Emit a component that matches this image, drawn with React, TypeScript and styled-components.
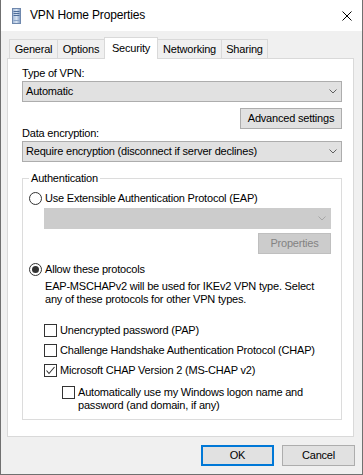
import React from 'react';
import styled, { createGlobalStyle } from 'styled-components';

const GlobalStyle = createGlobalStyle`
  html, body { margin: 0; padding: 0; background: #ffffff; }
  * { box-sizing: border-box; }
`;

const FONT = `"Liberation Sans", Arial, sans-serif`;

const Window = styled.div`
  width: 363px;
  height: 475px;
  display: flex;
  flex-direction: column;
  background: #f0f0f0;
  border: 1px solid #707070;
  border-top: none;
  font-family: ${FONT};
  font-size: 11px;
  line-height: 13px;
  letter-spacing: -0.2px;
  color: #000;
`;

const TitleBar = styled.div`
  height: 31px;
  flex: none;
  display: flex;
  align-items: center;
  background: #ffffff;
  padding-left: 11px;
`;

const Title = styled.div`
  flex: 1;
  margin-left: 9px;
  font-size: 12px;
  letter-spacing: -0.15px;
  color: #000;
`;

const CloseButton = styled.div`
  width: 30px;
  height: 31px;
  display: flex;
  align-items: center;
  justify-content: center;
`;

const Body = styled.div`
  flex: 1;
  display: flex;
  flex-direction: column;
  padding: 6px 8px 0 6px;
`;

const TabStrip = styled.div`
  display: flex;
  align-items: flex-end;
  height: 21px;
  margin-left: 2px;
`;

const Tab = styled.div<{ $active?: boolean; $w: number }>`
  width: ${p => p.$w}px;
  height: ${p => (p.$active ? 22 : 19)}px;
  margin-bottom: ${p => (p.$active ? -1 : 0)}px;
  display: flex;
  align-items: center;
  justify-content: center;
  padding-bottom: ${p => (p.$active ? 1 : 0)}px;
  background: ${p => (p.$active ? '#ffffff' : '#f0f0f0')};
  border: 1px solid #d9d9d9;
  border-bottom: none;
  position: relative;
  z-index: ${p => (p.$active ? 1 : 0)};
  & + & { margin-left: -1px; }
`;

const Panel = styled.div`
  width: 347px;
  height: 379px;
  background: #ffffff;
  border: 1px solid #d9d9d9;
  padding: 8px 11px 0 14px;
  display: flex;
  flex-direction: column;
`;

const Label = styled.div<{ $mt?: number }>`
  margin-top: ${p => p.$mt ?? 0}px;
  height: 13px;
`;

const Select = styled.div<{ $disabled?: boolean; $mt?: number; $ml?: number }>`
  height: 21px;
  margin-top: ${p => p.$mt ?? 0}px;
  margin-left: ${p => p.$ml ?? 0}px;
  display: flex;
  align-items: center;
  justify-content: space-between;
  padding: 0 4px 0 3px;
  background: ${p => (p.$disabled ? '#cccccc' : '#e1e1e1')};
  border: 1px solid ${p => (p.$disabled ? '#cccccc' : '#adadad')};
`;

const ButtonRow = styled.div<{ $mt?: number }>`
  display: flex;
  justify-content: flex-end;
  gap: 8px;
  margin-top: ${p => p.$mt ?? 0}px;
`;

const Button = styled.div<{ $w: number; $disabled?: boolean; $default?: boolean }>`
  width: ${p => p.$w}px;
  height: 21px;
  display: flex;
  align-items: center;
  justify-content: center;
  background: ${p => (p.$disabled ? '#cccccc' : '#e1e1e1')};
  color: ${p => (p.$disabled ? '#838383' : '#000')};
  border: ${p =>
    p.$default ? '2px solid #0078d7' : p.$disabled ? '1px solid #bfbfbf' : '1px solid #adadad'};
`;

const GroupBox = styled.fieldset`
  margin: 10px 0 0 0;
  padding: 7px 10px 7px 6px;
  border: 1px solid #dcdcdc;
  min-width: 0;
  display: flex;
  flex-direction: column;
`;

const Legend = styled.legend`
  padding: 0 2px;
  line-height: 13px;
`;

const OptionRow = styled.div<{ $mt?: number; $ml?: number; $top?: boolean }>`
  display: flex;
  align-items: ${p => (p.$top ? 'flex-start' : 'center')};
  gap: 3px;
  margin-top: ${p => p.$mt ?? 0}px;
  margin-left: ${p => p.$ml ?? 0}px;
  min-height: 13px;
`;

const RadioMark = styled.span<{ $checked?: boolean }>`
  width: 13px;
  height: 13px;
  flex: none;
  border-radius: 50%;
  border: 1px solid #333333;
  background: #ffffff;
  display: flex;
  align-items: center;
  justify-content: center;
  &::after {
    content: '';
    display: ${p => (p.$checked ? 'block' : 'none')};
    width: 7px;
    height: 7px;
    border-radius: 50%;
    background: #333333;
  }
`;

const CheckMark = styled.span`
  width: 13px;
  height: 13px;
  flex: none;
  border: 1px solid #333333;
  background: #ffffff;
  display: flex;
  align-items: center;
  justify-content: center;
`;

const Description = styled.div<{ $mt?: number; $ml?: number }>`
  margin-top: ${p => p.$mt ?? 0}px;
  margin-left: ${p => p.$ml ?? 0}px;
`;

const Footer = styled.div`
  display: flex;
  justify-content: flex-end;
  gap: 8px;
  margin-top: 8px;
  padding-right: 0;
  margin-right: -1px;
`;

const AppIcon = () => (
  <svg width="9" height="16" viewBox="0 0 9 16">
    <defs>
      <linearGradient id="ig" x1="0" y1="0" x2="1" y2="0">
        <stop offset="0" stopColor="#9fb6d6" />
        <stop offset="0.5" stopColor="#d6e2f0" />
        <stop offset="1" stopColor="#7d98c0" />
      </linearGradient>
    </defs>
    <rect x="0.5" y="0.5" width="8" height="15" fill="url(#ig)" stroke="#6f88ad" />
    <line x1="1.5" y1="3.5" x2="7.5" y2="3.5" stroke="#4e6d99" />
    <line x1="1.5" y1="5.5" x2="7.5" y2="5.5" stroke="#4e6d99" />
    <line x1="1.5" y1="7.5" x2="7.5" y2="7.5" stroke="#4e6d99" />
    <line x1="1.5" y1="12.5" x2="7.5" y2="12.5" stroke="#8aa3c6" />
  </svg>
);

const CloseIcon = () => (
  <svg width="10" height="10" viewBox="0 0 10 10">
    <path d="M0.5 0.5 L9.5 9.5 M9.5 0.5 L0.5 9.5" stroke="#000" strokeWidth="1" fill="none" />
  </svg>
);

const Chevron = ({ color }: { color: string }) => (
  <svg width="8" height="5" viewBox="0 0 8 5">
    <path d="M0.5 0.5 L4 4 L7.5 0.5" stroke={color} strokeWidth="1" fill="none" />
  </svg>
);

const Tick = () => (
  <svg width="11" height="11" viewBox="0 0 11 11">
    <path d="M1.5 5.5 L4 8.5 L9.5 2" stroke="#333" strokeWidth="1.1" fill="none" />
  </svg>
);

const tabs: { label: string; w: number; active?: boolean }[] = [
  { label: 'General', w: 49 },
  { label: 'Options', w: 48 },
  { label: 'Security', w: 54, active: true },
  { label: 'Networking', w: 65 },
  { label: 'Sharing', w: 47 },
];

export default function App() {
  return (
    <>
      <GlobalStyle />
      <Window>
        <TitleBar>
          <AppIcon />
          <Title>VPN Home Properties</Title>
          <CloseButton>
            <CloseIcon />
          </CloseButton>
        </TitleBar>
        <Body>
          <TabStrip>
            {tabs.map(t => (
              <Tab key={t.label} $w={t.w} $active={t.active}>
                {t.label}
              </Tab>
            ))}
          </TabStrip>
          <Panel>
            <Label>Type of VPN:</Label>
            <Select $mt={1}>
              <span>Automatic</span>
              <Chevron color="#606060" />
            </Select>
            <ButtonRow $mt={6}>
              <Button $w={102}>Advanced settings</Button>
            </ButtonRow>
            <Label $mt={-2}>Data encryption:</Label>
            <Select $mt={1}>
              <span>Require encryption (disconnect if server declines)</span>
              <Chevron color="#606060" />
            </Select>
            <GroupBox>
              <Legend>Authentication</Legend>
              <OptionRow>
                <RadioMark />
                <span>Use Extensible Authentication Protocol (EAP)</span>
              </OptionRow>
              <Select $disabled $mt={3} $ml={15}>
                <span />
                <Chevron color="#a6a6a6" />
              </Select>
              <ButtonRow $mt={4}>
                <Button $w={73} $disabled>
                  Properties
                </Button>
              </ButtonRow>
              <OptionRow $mt={9}>
                <RadioMark $checked />
                <span>Allow these protocols</span>
              </OptionRow>
              <Description $mt={4} $ml={16}>
                EAP-MSCHAPv2 will be used for IKEv2 VPN type. Select
                <br />
                any of these protocols for other VPN types.
              </Description>
              <OptionRow $mt={18} $ml={15}>
                <CheckMark />
                <span>Unencrypted password (PAP)</span>
              </OptionRow>
              <OptionRow $mt={7} $ml={15}>
                <CheckMark />
                <span>Challenge Handshake Authentication Protocol (CHAP)</span>
              </OptionRow>
              <OptionRow $mt={7} $ml={15}>
                <CheckMark>
                  <Tick />
                </CheckMark>
                <span>Microsoft CHAP Version 2 (MS-CHAP v2)</span>
              </OptionRow>
              <OptionRow $mt={9} $ml={33} $top>
                <CheckMark />
                <span>
                  Automatically use my Windows logon name and
                  <br />
                  password (and domain, if any)
                </span>
              </OptionRow>
            </GroupBox>
          </Panel>
          <Footer>
            <Button $w={73} $default>
              OK
            </Button>
            <Button $w={73}>Cancel</Button>
          </Footer>
        </Body>
      </Window>
    </>
  );
}
